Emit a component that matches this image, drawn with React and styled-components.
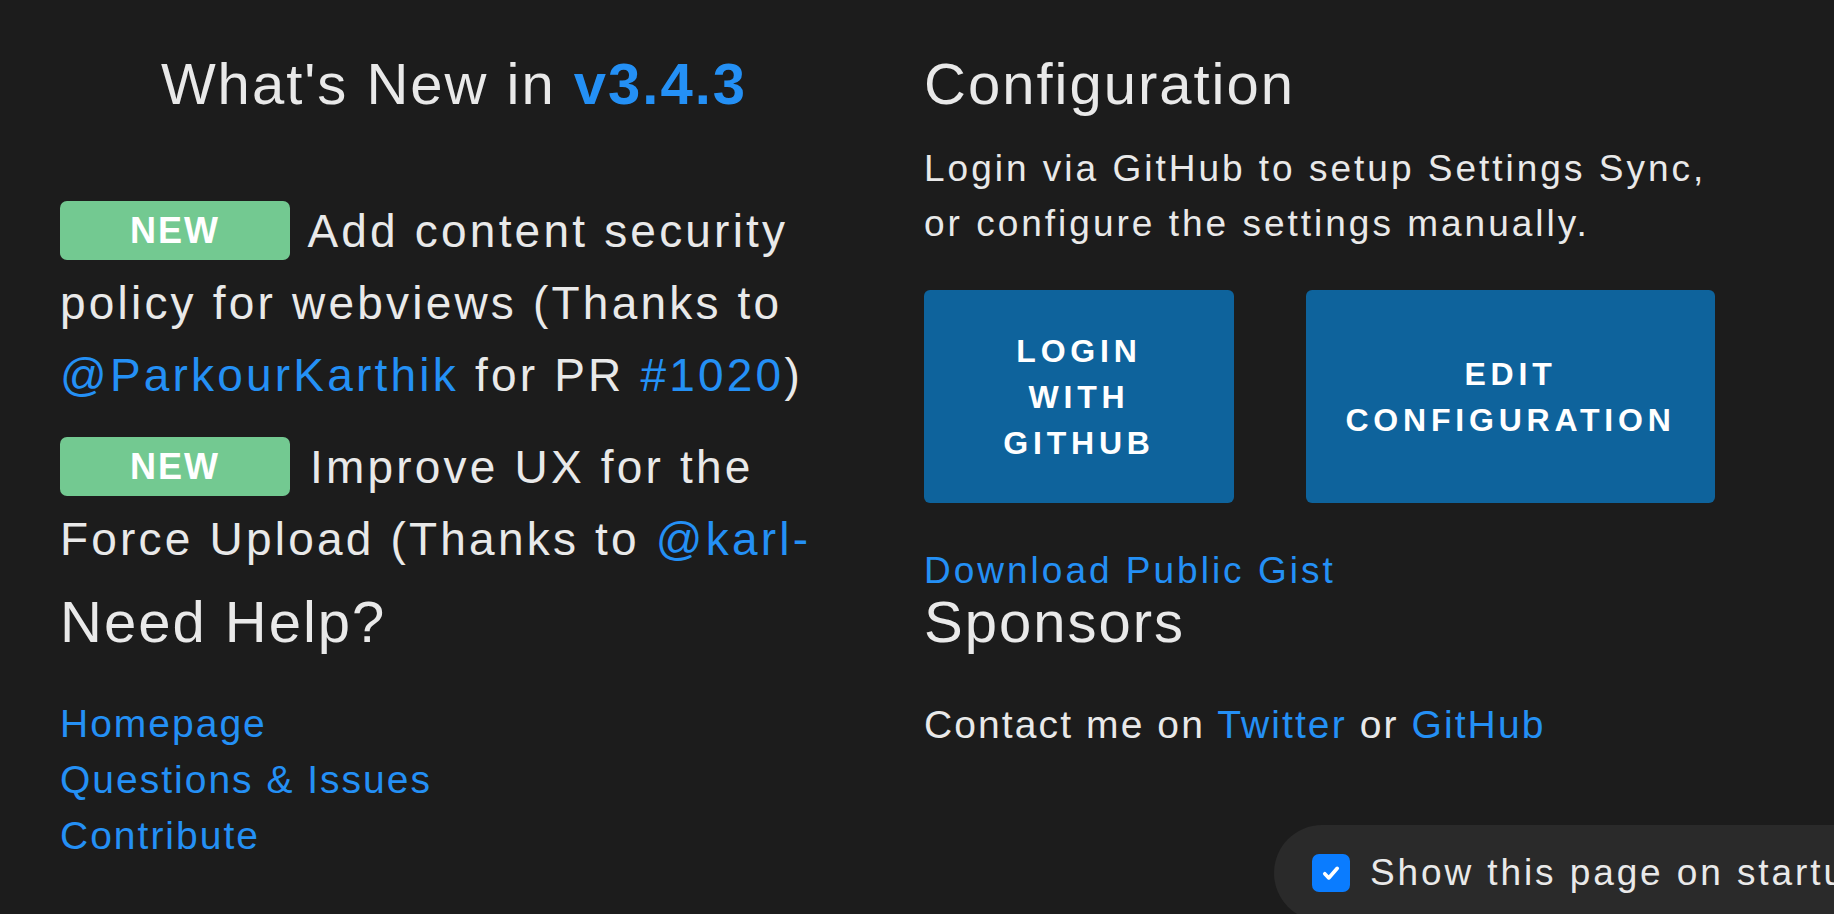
import React from 'react';
import styled, { createGlobalStyle } from 'styled-components';

const GlobalStyle = createGlobalStyle`
  html, body {
    margin: 0;
    padding: 0;
    background: #1c1c1c;
    overflow: hidden;
  }
  body {
    font-family: "Liberation Sans", Arial, Helvetica, sans-serif;
    color: #e9e9e9;
  }
`;

const App = () => {
  return (
    <>
      <GlobalStyle />
      <Page>
        <Column>
          <Heading $center>
            What's New in <Version>v3.4.3</Version>
          </Heading>
          <NewsList>
            <NewsItem>
              <Badge>NEW</Badge> Add content security policy for webviews (Thanks to{' '}
              <Link href="#">@ParkourKarthik</Link> for PR <Link href="#">#1020</Link>)
            </NewsItem>
            <NewsItem>
              <Badge>NEW</Badge> Improve UX for the Force Upload (Thanks to{' '}
              <Link href="#">@karl-run</Link> for PR <Link href="#">#1028</Link>)
            </NewsItem>
          </NewsList>
          <Heading $top={12}>Need Help?</Heading>
          <HelpLinks>
            <Link href="#">Homepage</Link>
            <Link href="#">Questions &amp; Issues</Link>
            <Link href="#">Contribute</Link>
          </HelpLinks>
        </Column>

        <Column>
          <Heading>Configuration</Heading>
          <Intro>
            Login via GitHub to setup Settings Sync, or configure the settings manually.
          </Intro>
          <ButtonRow>
            <ActionButton $width={310}>Login with GitHub</ActionButton>
            <ActionButton $width={409}>Edit Configuration</ActionButton>
          </ButtonRow>
          <GistLink href="#">Download Public Gist</GistLink>
          <Heading $top={-1}>Sponsors</Heading>
          <Contact>
            Contact me on <Link href="#">Twitter</Link> or <Link href="#">GitHub</Link>
          </Contact>
        </Column>
      </Page>

      <StartupBar>
        <CheckBox>
          <svg width="26" height="26" viewBox="0 0 20 20" fill="none">
            <path
              d="M5.2 10.6l3.1 3.2L14.8 6.4"
              stroke="#fff"
              strokeWidth="2.8"
              strokeLinecap="round"
              strokeLinejoin="round"
            />
          </svg>
        </CheckBox>
        <StartupLabel>Show this page on startup</StartupLabel>
      </StartupBar>
    </>
  );
};

export default App;

const Page = styled.div`
  display: grid;
  grid-template-columns: 788px 810px;
  column-gap: 76px;
  padding: 51px 0 0 60px;
`;

const Column = styled.div`
  display: flex;
  flex-direction: column;
  min-width: 0;
`;

const Heading = styled.h1`
  margin: ${({ $top }) => $top || 0}px 0 0;
  font-size: 58px;
  line-height: 66px;
  font-weight: 400;
  letter-spacing: 2px;
  color: #e9e9e9;
  text-align: ${({ $center }) => ($center ? 'center' : 'left')};
`;

const Version = styled.span`
  font-weight: 700;
  color: #2490f5;
`;

const Link = styled.a`
  color: #2490f5;
  text-decoration: none;
`;

const NewsList = styled.div`
  margin-top: 78px;
  height: 382px;
  overflow: hidden;
  font-size: 46px;
  line-height: 72px;
  letter-spacing: 3.2px;
`;

const NewsItem = styled.p`
  margin: 0 0 20px;
`;

const Badge = styled.span`
  display: inline-block;
  width: 230px;
  height: 59px;
  margin-right: 4px;
  border-radius: 7px;
  background: #73c991;
  color: #ffffff;
  font-size: 36px;
  line-height: 59px;
  font-weight: 700;
  letter-spacing: 2px;
  text-align: center;
  vertical-align: 4px;
`;

const HelpLinks = styled.div`
  display: flex;
  flex-direction: column;
  align-items: flex-start;
  margin-top: 41px;
  font-size: 39px;
  line-height: 56px;
  letter-spacing: 2px;
`;

const Intro = styled.p`
  margin: 24px 0 0;
  font-size: 37px;
  line-height: 55px;
  letter-spacing: 3px;
`;

const ButtonRow = styled.div`
  display: flex;
  gap: 72px;
  margin-top: 39px;
`;

const ActionButton = styled.button`
  display: flex;
  align-items: center;
  justify-content: center;
  width: ${({ $width }) => $width}px;
  height: 213px;
  padding: 0 40px;
  border: none;
  border-radius: 6px;
  background: #0e639c;
  color: #ffffff;
  font-family: "Liberation Sans", Arial, Helvetica, sans-serif;
  font-size: 32px;
  line-height: 46px;
  font-weight: 700;
  letter-spacing: 4.8px;
  text-transform: uppercase;
  text-align: center;
`;

const GistLink = styled(Link)`
  display: block;
  margin-top: 49px;
  font-size: 37px;
  line-height: 38px;
  letter-spacing: 3px;
`;

const Contact = styled.p`
  margin: 42px 0 0;
  font-size: 39px;
  line-height: 56px;
  letter-spacing: 2.1px;
`;

const StartupBar = styled.div`
  position: fixed;
  left: 1274px;
  top: 825px;
  display: flex;
  align-items: center;
  height: 96px;
  padding: 0 48px 0 38px;
  border-radius: 48px;
  background: #2a2a2a;
  white-space: nowrap;
`;

const CheckBox = styled.span`
  display: flex;
  align-items: center;
  justify-content: center;
  flex: none;
  width: 38px;
  height: 38px;
  border-radius: 7px;
  background: #0a7cff;
`;

const StartupLabel = styled.span`
  margin-left: 20px;
  font-size: 37px;
  letter-spacing: 2.9px;
  color: #e9e9e9;
`;
